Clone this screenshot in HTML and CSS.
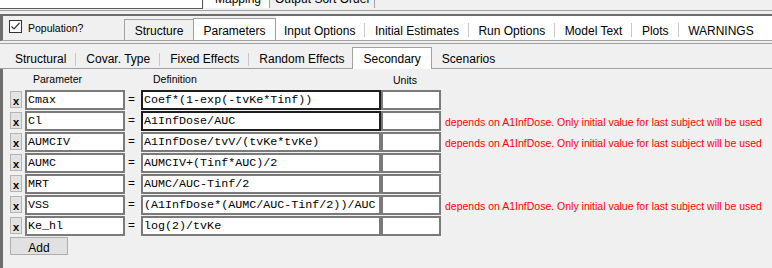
FILE: index.html
```html
<!DOCTYPE html>
<html lang="en">
<head>
    <meta charset="UTF-8">
    <meta name="viewport" content="width=device-width, initial-scale=1.0">
    <title>Secondary Parameters</title>
    <link rel="stylesheet" href="styles.css">
</head>
<body>
    <div class="strip">
        <div class="blank"></div>
        <div class="oldtab active"><span>Mapping</span></div>
        <div class="oldtab"><span>Output Sort Order</span></div>
    </div>
    <div class="rule"></div>

    <div class="head">
        <label class="pop">
            <span class="check">
                <svg width="11" height="11" viewBox="0 0 11 11"><polyline points="1.5,5.5 4,8 9.5,2" fill="none" stroke="#333" stroke-width="1.2"/></svg>
            </span>
            <span class="pop-text">Population?</span>
        </label>
        <div class="tab side">Structure</div>
        <div class="tab selected">Parameters</div>
        <div class="flat">
            <div class="item first">Input Options</div><span class="sep"></span>
            <div class="item">Initial Estimates</div><span class="sep"></span>
            <div class="item">Run Options</div><span class="sep"></span>
            <div class="item">Model Text</div><span class="sep"></span>
            <div class="item">Plots</div><span class="sep"></span>
            <div class="item">WARNINGS</div>
        </div>
    </div>

    <div class="subtabs">
        <div class="item">Structural</div><span class="sep"></span>
        <div class="item">Covar. Type</div><span class="sep"></span>
        <div class="item">Fixed Effects</div><span class="sep"></span>
        <div class="item before">Random Effects</div>
        <div class="subtab">Secondary</div>
        <div class="item">Scenarios</div>
    </div>

    <div class="pane">
        <div class="hdr">
            <div class="h-gap"></div>
            <div class="h-name">Parameter</div>
            <div class="h-eq"></div>
            <div class="h-def">Definition</div>
            <div class="h-units">Units</div>
        </div>

        <div class="row">
            <div class="del">x</div>
            <div class="field name">Cmax</div>
            <div class="eq">=</div>
            <div class="field def focus">Coef*(1-exp(-tvKe*Tinf))</div>
            <div class="field units"></div>
        </div>
        <div class="row">
            <div class="del">x</div>
            <div class="field name">Cl</div>
            <div class="eq">=</div>
            <div class="field def focus">A1InfDose/AUC</div>
            <div class="field units"></div>
            <div class="note">depends on A1InfDose. Only initial value for last subject will be used</div>
        </div>
        <div class="row">
            <div class="del">x</div>
            <div class="field name">AUMCIV</div>
            <div class="eq">=</div>
            <div class="field def">A1InfDose/tvV/(tvKe*tvKe)</div>
            <div class="field units"></div>
            <div class="note">depends on A1InfDose. Only initial value for last subject will be used</div>
        </div>
        <div class="row">
            <div class="del">x</div>
            <div class="field name">AUMC</div>
            <div class="eq">=</div>
            <div class="field def">AUMCIV+(Tinf*AUC)/2</div>
            <div class="field units"></div>
        </div>
        <div class="row">
            <div class="del">x</div>
            <div class="field name">MRT</div>
            <div class="eq">=</div>
            <div class="field def">AUMC/AUC-Tinf/2</div>
            <div class="field units"></div>
        </div>
        <div class="row">
            <div class="del">x</div>
            <div class="field name">VSS</div>
            <div class="eq">=</div>
            <div class="field def">(A1InfDose*(AUMC/AUC-Tinf/2))/AUC</div>
            <div class="field units"></div>
            <div class="note">depends on A1InfDose. Only initial value for last subject will be used</div>
        </div>
        <div class="row">
            <div class="del">x</div>
            <div class="field name">Ke_hl</div>
            <div class="eq">=</div>
            <div class="field def">log(2)/tvKe</div>
            <div class="field units"></div>
        </div>

        <button class="add">Add</button>
    </div>
</body>
</html>
```

FILE: styles.css
```css
body {
    margin: 0;
    width: 772px;
    height: 268px;
    overflow: hidden;
    background: #f0f0f0;
    font-family: "Liberation Sans", Arial, sans-serif;
    font-size: 12px;
    color: #000;
}

/* old tab row, mostly scrolled off the top */
.strip {
    display: flex;
    height: 9px;
    overflow: hidden;
}
.blank {
    width: 202px;
    height: 8px;
    background: #fff;
    border-right: 1px solid #5a5a5a;
    border-bottom: 1px solid #5a5a5a;
}
.oldtab {
    height: 8px;
    overflow: hidden;
    line-height: 14px;
    padding: 0 4px 0 5px;
    border-right: 1px solid #a0a0a0;
}
.oldtab span {
    display: block;
    margin-top: -8px;
}
.oldtab.active {
    background: #fff;
    margin-left: 1px;
    padding: 0 8px 0 11px;
}
.rule {
    height: 1px;
    background: #a0a0a0;
    margin: 1px 0 3px;
}

/* main tab row */
.head {
    display: flex;
    align-items: flex-end;
    height: 24px;
    border-top: 2px solid #6d6d6d;
    border-left: 3px solid #6d6d6d;
    border-bottom: 1px solid #a0a0a0;
}
.pop {
    align-self: stretch;
    width: 121px;
    display: flex;
    align-items: flex-start;
    padding-top: 4px;
    box-sizing: border-box;
    font-size: 10.5px;
    line-height: 13px;
}
.check {
    width: 13px;
    height: 13px;
    box-sizing: border-box;
    border: 1px solid #333;
    background: #fff;
    margin: 0 6px;
}
.check svg {
    display: block;
}
.pop-text {
    margin-top: 2px;
}
.tab {
    box-sizing: border-box;
    text-align: center;
    line-height: 14px;
    border: 1px solid #a0a0a0;
    border-bottom: none;
}
.tab.side {
    width: 69px;
    height: 21px;
    padding-top: 4px;
    border-right: none;
}
.tab.selected {
    width: 83px;
    height: 22px;
    padding-top: 5px;
    background: #fff;
}
.flat {
    flex: 1;
    align-self: stretch;
    display: flex;
    align-items: flex-end;
    background: #fff;
}
.item {
    padding: 0 9px 2px 9.5px;
    line-height: 14px;
    white-space: nowrap;
}
.item.first {
    padding-left: 8px;
}
.sep {
    width: 1px;
    height: 14px;
    margin-bottom: 3px;
    background: #c8c8c8;
}

/* sub tab row */
.subtabs {
    display: flex;
    align-items: flex-end;
    height: 24px;
    margin-top: 2px;
    padding-left: 5px;
    border-top: 1px solid #a0a0a0;
    border-bottom: 1px solid #a0a0a0;
}
.subtabs .item {
    padding-left: 10px;
}
.subtabs .sep {
    height: 13px;
    margin-bottom: 2px;
}
.subtabs .before {
    padding-right: 8px;
}
.subtab {
    box-sizing: border-box;
    height: 22px;
    margin-bottom: -1px;
    padding: 4px 10px 0 10px;
    line-height: 14px;
    background: #fff;
    border: 1px solid #a0a0a0;
    border-bottom: none;
}

/* parameter grid */
.pane {
    height: 199px;
    border-left: 3px solid #6d6d6d;
    padding-left: 7px;
}
.hdr {
    display: flex;
    height: 21px;
    font-size: 10.5px;
    line-height: 13px;
}
.h-gap {
    width: 15px;
}
.h-name {
    width: 100px;
    box-sizing: border-box;
    padding: 4px 0 0 8px;
}
.h-eq {
    width: 16px;
}
.h-def {
    width: 240px;
    box-sizing: border-box;
    padding: 4px 0 0 12px;
}
.h-units {
    padding: 5px 0 0 12px;
}
.row {
    display: flex;
    height: 20px;
    margin-bottom: 1px;
}
.del {
    width: 12px;
    height: 17px;
    margin: 1px 3px 0 0;
    box-sizing: border-box;
    border: 1px solid #b4b4b4;
    background: #e3e3e3;
    font-family: "Liberation Mono", "Courier New", monospace;
    font-weight: bold;
    font-size: 11px;
    line-height: 11px;
    padding-top: 5px;
    text-align: center;
    overflow: hidden;
}
.field {
    box-sizing: border-box;
    border: 2px solid #7a7a7a;
    background: #fff;
    font-family: "Liberation Mono", "Courier New", monospace;
    font-size: 11.7px;
    line-height: 17px;
    padding-left: 1px;
    white-space: nowrap;
    overflow: hidden;
}
.name {
    width: 100px;
}
.def {
    width: 240px;
}
.def.focus {
    border-color: #1e1e1e;
}
.units {
    width: 60px;
}
.eq {
    width: 16px;
    box-sizing: border-box;
    padding-left: 3px;
    font-family: "Liberation Mono", "Courier New", monospace;
    font-size: 11.7px;
    line-height: 21px;
}
.note {
    margin-left: 4px;
    padding-top: 3px;
    color: #ff0000;
    font-size: 10.5px;
    line-height: 17px;
    white-space: nowrap;
}
.add {
    display: block;
    margin-top: 1px;
    width: 58px;
    height: 18px;
    box-sizing: border-box;
    border: 1px solid #adadad;
    background: #e1e1e1;
    font-family: "Liberation Sans", Arial, sans-serif;
    font-size: 12px;
    line-height: 14px;
    padding: 3px 0 0;
    text-align: center;
    color: #000;
}
```
